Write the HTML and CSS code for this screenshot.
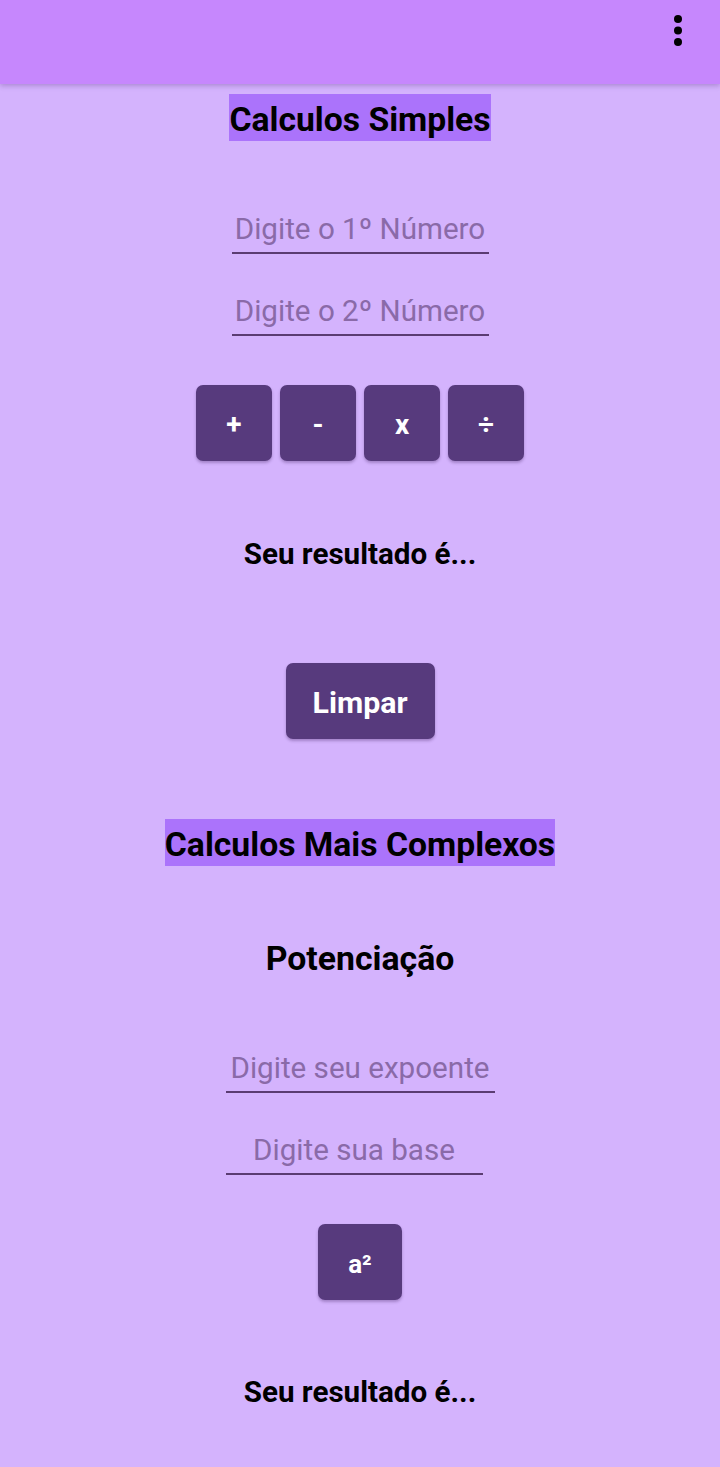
FILE: index.html
```html
<!DOCTYPE html>
<html lang="pt">
<head>
<meta charset="utf-8">
<title>Calculadora</title>
<link rel="stylesheet" href="styles.css">
</head>
<body>
<header class="appbar">
  <button class="menu" aria-label="Mais opções">
    <svg width="8" height="32" viewBox="0 0 8 32"><circle cx="4" cy="4" r="4"/><circle cx="4" cy="15.5" r="4"/><circle cx="4" cy="27" r="4"/></svg>
  </button>
</header>
<main class="content">
  <h1 class="section-title t1">Calculos Simples</h1>
  <div class="field f1">Digite o 1º Número</div>
  <div class="field f2">Digite o 2º Número</div>
  <div class="ops">
    <button class="btn op">+</button>
    <button class="btn op">-</button>
    <button class="btn op">x</button>
    <button class="btn op">÷</button>
  </div>
  <p class="result r1">Seu resultado é...</p>
  <button class="btn clear">Limpar</button>
  <h1 class="section-title t2">Calculos Mais Complexos</h1>
  <h2 class="subtitle">Potenciação</h2>
  <div class="pow-fields">
    <div class="field f3">Digite seu expoente</div>
    <div class="field f4">Digite sua base</div>
  </div>
  <button class="btn pow">a²</button>
  <p class="result r2">Seu resultado é...</p>
</main>
</body>
</html>
```
FILE: styles.css
```css
* { box-sizing: border-box; }
html, body {
  margin: 0;
  padding: 0;
}
body {
  background: #d4b3fd;
  font-family: Roboto, "Noto Sans", "Liberation Sans", sans-serif;
  color: #000;
  min-height: 1467px;
}
.appbar {
  height: 84px;
  background: #c687fd;
  box-shadow: 0 2px 5px rgba(60, 20, 100, 0.25);
  display: flex;
  justify-content: flex-end;
  align-items: flex-start;
  position: relative;
  z-index: 1;
}
.menu {
  border: 0;
  background: transparent;
  padding: 0;
  margin: 15px 38px 0 0;
  width: 8px;
  height: 32px;
  display: block;
}
.menu svg { display: block; fill: #000; }
.content {
  display: flex;
  flex-direction: column;
  align-items: center;
}
.section-title {
  margin: 0;
  font-size: 33.7px;
  font-weight: 700;
  line-height: 43px;
  padding-top: 4px;
  height: 47px;
  background: #ab73fb;
  color: #000;
}
.t1 { margin-top: 10px; }
.field {
  height: 48px;
  line-height: 46px;
  font-size: 29.6px;
  color: #8a6aa8;
  text-align: center;
  border-bottom: 2px solid #5b3c72;
  white-space: nowrap;
}
.f1 { width: 257px; margin-top: 65px; }
.f2 { width: 257px; margin-top: 34px; }
.ops {
  display: flex;
  gap: 8px;
  margin-top: 49px;
}
.btn {
  border: 0;
  background: #573a7d;
  color: #fff;
  font-family: inherit;
  font-weight: 700;
  border-radius: 7px;
  box-shadow: 0 2px 3px rgba(50, 20, 80, 0.3);
  padding: 3px 0 0;
}
.op {
  width: 76px;
  height: 76px;
  font-size: 28px;
}
.result {
  margin: 77px 0 0;
  font-size: 29.6px;
  font-weight: 700;
  line-height: 33px;
}
.clear {
  margin-top: 92px;
  width: 149px;
  height: 76px;
  font-size: 30.3px;
}
.t2 { margin-top: 80px; }
.subtitle {
  margin: 74px 0 0;
  font-size: 33.8px;
  line-height: 38px;
  font-weight: 700;
}
.pow-fields {
  width: 269px;
  display: flex;
  flex-direction: column;
  align-items: flex-start;
  margin-top: 67px;
}
.f3 { width: 269px; }
.f4 { width: 257px; margin-top: 34px; }
.pow {
  margin-top: 49px;
  width: 84px;
  height: 76px;
  font-size: 26px;
}
.r2 { margin-top: 76px; }
```
